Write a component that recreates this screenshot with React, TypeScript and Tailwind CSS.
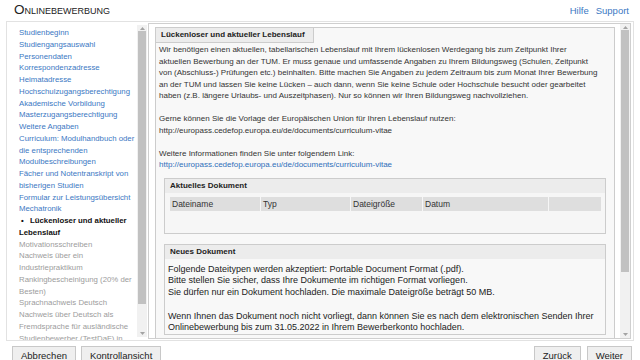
type NavItem = { lines: string[]; state: 'link' | 'current' | 'muted' };

const navItems: NavItem[] = [
  { lines: ['Studienbeginn'], state: 'link' },
  { lines: ['Studiengangsauswahl'], state: 'link' },
  { lines: ['Personendaten'], state: 'link' },
  { lines: ['Korrespondenzadresse'], state: 'link' },
  { lines: ['Heimatadresse'], state: 'link' },
  { lines: ['Hochschulzugangsberechtigung'], state: 'link' },
  { lines: ['Akademische Vorbildung'], state: 'link' },
  { lines: ['Masterzugangsberechtigung'], state: 'link' },
  { lines: ['Weitere Angaben'], state: 'link' },
  { lines: ['Curriculum: Modulhandbuch oder', 'die entsprechenden', 'Modulbeschreibungen'], state: 'link' },
  { lines: ['Fächer und Notentranskript von', 'bisherigen Studien'], state: 'link' },
  { lines: ['Formular zur Leistungsübersicht', 'Mechatronik'], state: 'link' },
  { lines: ['Lückenloser und aktueller', 'Lebenslauf'], state: 'current' },
  { lines: ['Motivationsschreiben'], state: 'muted' },
  { lines: ['Nachweis über ein', 'Industriepraktikum'], state: 'muted' },
  { lines: ['Rankingbescheinigung (20% der', 'Besten)'], state: 'muted' },
  { lines: ['Sprachnachweis Deutsch'], state: 'muted' },
  { lines: ['Nachweis über Deutsch als', 'Fremdsprache für ausländische', 'Studienbewerber (TestDaF) in', 'Deutsch'], state: 'muted' }
];

const columns = [
  { label: 'Dateiname', width: 'w-[90px]' },
  { label: 'Typ', width: 'w-[89px]' },
  { label: 'Dateigröße', width: 'w-[71px]' },
  { label: 'Datum', width: 'w-[125px]' },
  { label: '', width: 'flex-1' }
];

function Arrow({ down }: { down?: boolean }) {
  return (
    <svg width="5" height="3" viewBox="0 0 5 3" className="block">
      <polygon points={down ? '0,0 5,0 2.5,3' : '0,3 5,3 2.5,0'} fill="#a3a3a3" />
    </svg>
  );
}

function Scrollbar({ thumb }: { thumb: string }) {
  return (
    <div className="flex w-[10px] flex-col items-center bg-[#f1f1f1]">
      <div className="flex h-[6px] items-center">
        <Arrow />
      </div>
      <div className={`w-[8px] bg-[#c1c1c1] ${thumb}`} />
      <div className="flex-1" />
      <div className="flex h-[7px] items-center">
        <Arrow down />
      </div>
    </div>
  );
}

function Button({ children }: { children: string }) {
  return (
    <button className="h-[18px] border border-[#c8c8c8] bg-[#efefef] px-[8px] text-[9.5px] leading-[15px] text-[#222]">
      {children}
    </button>
  );
}

export default function App() {
  return (
    <div className="h-[360px] w-[640px] overflow-hidden bg-white font-['Liberation_Sans',Arial,sans-serif] text-[#333]">
      <header className="flex h-[21px] items-start justify-between pl-[14px] pr-[11px] pt-[3px]">
        <h1 className="text-[13.5px] leading-[14px] text-[#222] [font-variant:small-caps]">Onlinebewerbung</h1>
        <nav className="flex gap-[7px] pt-[2px] text-[9.5px] leading-[11px] text-[#3b78c3]">
          <a>Hilfe</a>
          <a>Support</a>
        </nav>
      </header>

      <div className="mx-[6px] flex h-[320px] border border-[#e2e2e2]">
        <aside className="w-[130px] overflow-hidden pl-[12px] pt-[5px] text-[7.8px] leading-[11.75px]">
          {navItems.map((item) => (
            <div
              key={item.lines[0]}
              className={
                item.state === 'link'
                  ? 'text-[#3b78c3]'
                  : item.state === 'current'
                    ? 'font-bold text-[#111]'
                    : 'text-[#9c9c9c]'
              }
            >
              {item.lines.map((line, i) => (
                <div key={line} className="whitespace-nowrap">
                  {item.state === 'current' && i === 0 ? (
                    <>
                      <span className="inline-block w-[11px] pl-[2px]">•</span>
                      {line}
                    </>
                  ) : (
                    line
                  )}
                </div>
              ))}
            </div>
          ))}
        </aside>

        <div className="my-[3px] flex">
          <Scrollbar thumb="h-[273px]" />
        </div>

        <section className="my-[1px] ml-[1px] mr-[2px] flex flex-1 border border-[#cfcfcf]">
          <div className="flex-1 overflow-hidden pl-[6px] pr-[5px] pt-[3px]">
            <div className="h-[400px] border border-[#cccccc] bg-[#f8f8f8]">
              <div className="h-[15px] w-[158px] border-b border-r border-[#cccccc] bg-[#ececec] pl-[5px] text-[8px] font-bold leading-[14px] text-[#222]">
                Lückenloser und aktueller Lebenslauf
              </div>

              <p className="mt-[1px] whitespace-nowrap px-[3px] text-[8px] leading-[11.5px]">
                Wir benötigen einen aktuellen, tabellarischen Lebenslauf mit Ihrem lückenlosen Werdegang bis zum Zeitpunkt Ihrer
                <br />
                aktuellen Bewerbung an der TUM. Er muss genaue und umfassende Angaben zu Ihrem Bildungsweg (Schulen, Zeitpunkt
                <br />
                von (Abschluss-) Prüfungen etc.) beinhalten. Bitte machen Sie Angaben zu jedem Zeitraum bis zum Monat Ihrer Bewerbung
                <br />
                an der TUM und lassen Sie keine Lücken – auch dann, wenn Sie keine Schule oder Hochschule besucht oder gearbeitet
                <br />
                haben (z.B. längere Urlaubs- und Auszeitphasen). Nur so können wir Ihren Bildungsweg nachvollziehen.
                <br />
                <br />
                Gerne können Sie die Vorlage der Europäischen Union für Ihren Lebenslauf nutzen:
                <br />
                http://europass.cedefop.europa.eu/de/documents/curriculum-vitae
                <br />
                <br />
                Weitere Informationen finden Sie unter folgendem Link:
                <br />
                <a className="text-[#2f6fba]">http://europass.cedefop.europa.eu/de/documents/curriculum-vitae</a>
              </p>

              <div className="mx-[8px] mt-[7px] border border-[#cccccc] bg-[#f6f6f6]">
                <div className="h-[14px] bg-[#ececec] pl-[5px] text-[8px] font-bold leading-[14px] text-[#222]">
                  Aktuelles Dokument
                </div>
                <div className="h-[40px] pl-[5px] pr-[4px] pt-[4px]">
                  <div className="flex h-[14px] gap-[1px]">
                    {columns.map((col) => (
                      <div
                        key={col.label || 'empty'}
                        className={`${col.width} bg-[#dedede] pl-[2px] text-[8.5px] leading-[14px] text-[#333]`}
                      >
                        {col.label}
                      </div>
                    ))}
                  </div>
                </div>
              </div>

              <div className="mx-[8px] mt-[10px] border border-[#cccccc] bg-[#f8f8f8]">
                <div className="h-[14px] bg-[#ececec] pl-[5px] text-[8px] font-bold leading-[14px] text-[#222]">
                  Neues Dokument
                </div>
                <p className="whitespace-nowrap pl-[3px] pt-[5px] text-[9px] leading-[11.75px] text-[#222]">
                  Folgende Dateitypen werden akzeptiert: Portable Document Format (.pdf).
                  <br />
                  Bitte stellen Sie sicher, dass Ihre Dokumente im richtigen Format vorliegen.
                  <br />
                  Sie dürfen nur ein Dokument hochladen. Die maximale Dateigröße beträgt 50 MB.
                  <br />
                  <br />
                  Wenn Ihnen das Dokument noch nicht vorliegt, dann können Sie es nach dem elektronischen Senden Ihrer
                  <br />
                  Onlinebewerbung bis zum 31.05.2022 in Ihrem Bewerberkonto hochladen.
                </p>
              </div>
            </div>
          </div>
          <Scrollbar thumb="h-[242px]" />
        </section>
      </div>

      <footer className="flex justify-between pl-[12px] pr-[8px] pt-[5px]">
        <div className="flex gap-[5px]">
          <Button>Abbrechen</Button>
          <Button>Kontrollansicht</Button>
        </div>
        <div className="flex gap-[6px]">
          <Button>Zurück</Button>
          <Button>Weiter</Button>
        </div>
      </footer>
    </div>
  );
}
